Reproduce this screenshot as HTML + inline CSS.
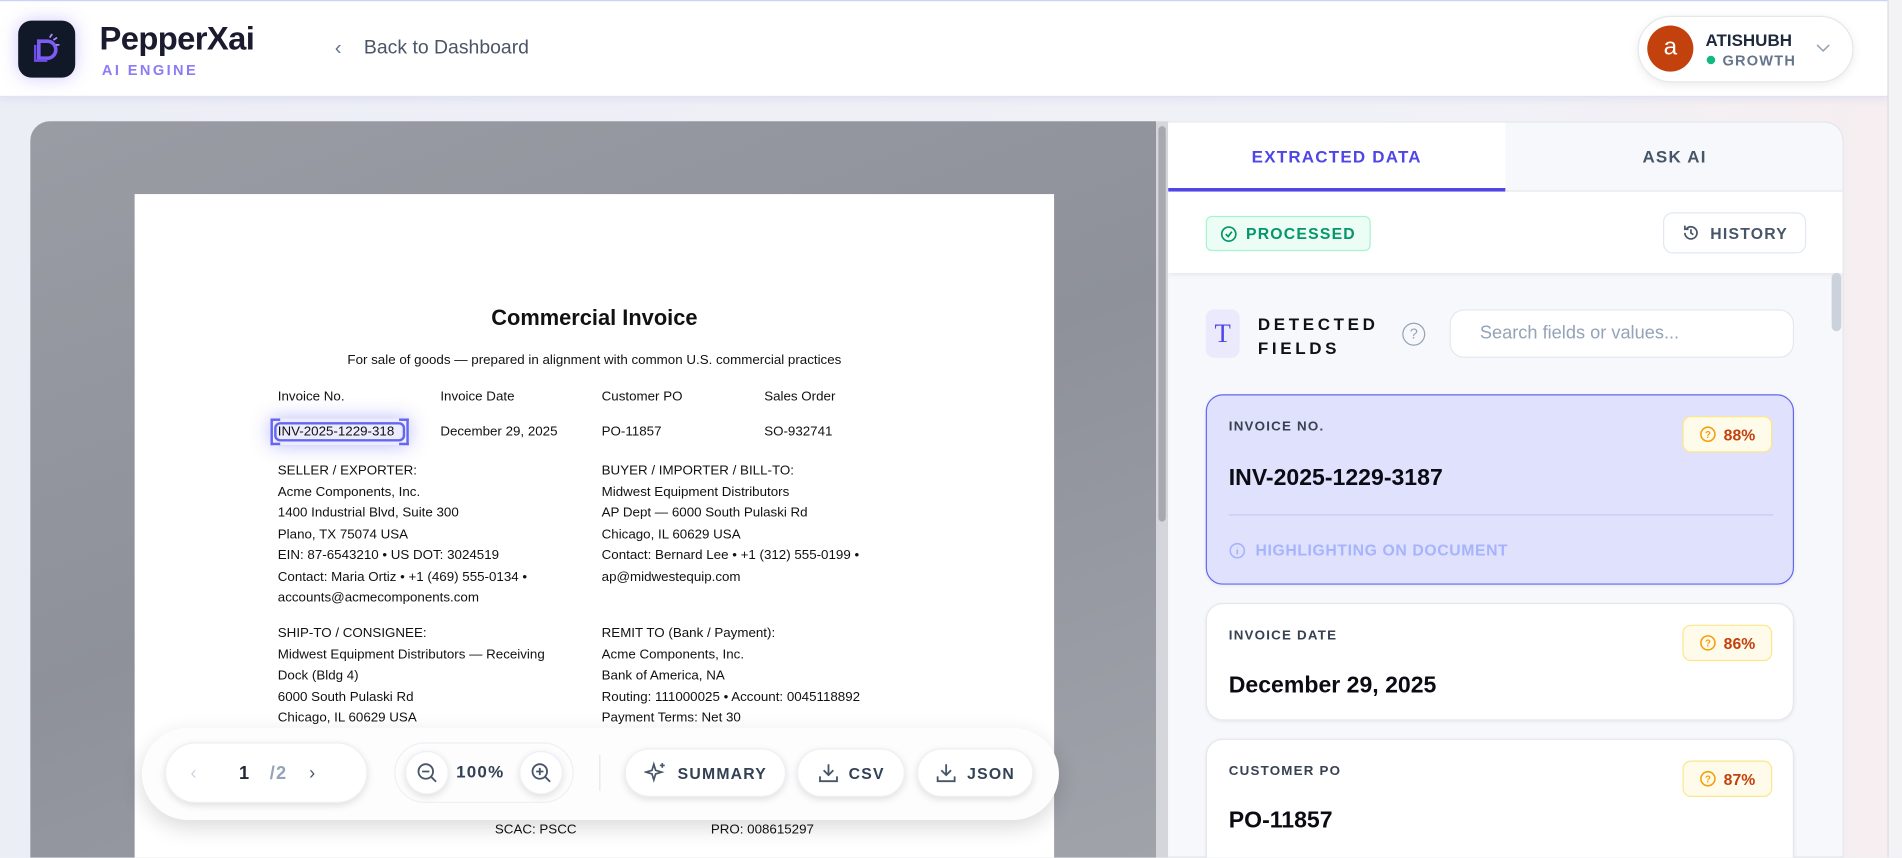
<!DOCTYPE html>
<html><head><meta charset="utf-8"><style>
*{box-sizing:border-box;margin:0;padding:0}
html,body{width:1902px;height:858px;overflow:hidden;background:#eef0f7;font-family:"Liberation Sans",sans-serif}
#w{position:absolute;left:0;top:0;width:1568px;height:707px;overflow:hidden;transform:scale(1.21301);transform-origin:0 0;background:linear-gradient(90deg,#eceef6,#f1f1f7 80%,#f6eef0)}
.a{position:absolute}
.hdr{left:0;top:0;width:1556px;height:80px;background:#fff;border-top:1px solid #c7d2fe;border-bottom:1px solid #dfe3f3;box-shadow:0 2px 6px rgba(120,120,200,.12)}
.doc div{position:absolute;font-size:11px;color:#111;white-space:nowrap;font-family:"Liberation Sans Narrow","Liberation Sans",sans-serif}
.pill{position:absolute;background:#fff;border-radius:30px;box-shadow:0 2px 6px rgba(0,0,0,.12);border:1px solid #eef0f4;display:flex;align-items:center;justify-content:center;font-weight:bold;font-size:13px;color:#334155;letter-spacing:1px;gap:8px}
.card{position:absolute;left:994px;width:485px;border-radius:14px;background:#fff;border:1px solid #e5e7eb;box-shadow:0 1px 3px rgba(0,0,0,.06)}
.lbl{position:absolute;left:18px;top:20px;font-size:11px;font-weight:bold;letter-spacing:1px;color:#374151}
.val{position:absolute;left:18px;font-size:19px;font-weight:bold;color:#0b0b14}
.bdg{position:absolute;right:17px;top:17px;width:74px;height:30px;background:#fffbeb;border:1px solid #fde68a;border-radius:7px;display:flex;align-items:center;justify-content:center;gap:6px;color:#c2410c;font-weight:bold;font-size:13px}
</style></head><body><div id="w">
<div class="a hdr"></div>
<div class="a" style="left:1556px;top:0;width:12px;height:707px;background:#f3f3f5;border-left:1px solid #dcdce0"></div>
<div class="a" style="left:15px;top:17px;width:47px;height:47px;border-radius:11px;background:#111827;box-shadow:0 0 14px rgba(120,100,255,.35)">
<svg width="47" height="47" viewBox="0 0 47 47"><path d="M17 17h7a7 7 0 0 1 0 14h-7z" fill="none" stroke="#7c5cf6" stroke-width="3"/><path d="M14 20v13h10" fill="none" stroke="#6d4de6" stroke-width="2"/><path d="M26 14l2-3M29 16l3-2M31 20h3" stroke="#a78bfa" stroke-width="1.5"/></svg></div>
<div class="a" style="left:82px;top:17px;font-size:27px;font-weight:bold;color:#1a1b2e;letter-spacing:-.5px">PepperXai</div>
<div class="a" style="left:84px;top:51px;font-size:12px;color:#8b7cf6;letter-spacing:2px;font-weight:bold">AI ENGINE</div>
<div class="a" style="left:276px;top:30px;font-size:17px;color:#64748b">&#8249;</div>
<div class="a" style="left:300px;top:31px;font-size:16px;color:#4b5568">Back to Dashboard</div>
<div class="a" style="left:1350px;top:13px;width:178px;height:55px;border-radius:28px;background:#fff;border:1px solid #e5e7eb;box-shadow:0 2px 8px rgba(0,0,0,.08)"></div>
<div class="a" style="left:1358px;top:21px;width:38px;height:38px;border-radius:50%;background:#c2410c;color:#fff;font-size:20px;text-align:center;line-height:36px">a</div>
<div class="a" style="left:1406px;top:25px;font-size:14px;font-weight:bold;color:#1e293b">ATISHUBH</div>
<div class="a" style="left:1407px;top:46px;width:7px;height:7px;border-radius:50%;background:#10b981"></div>
<div class="a" style="left:1420px;top:43px;font-size:12px;color:#64748b;letter-spacing:1px;font-weight:bold">GROWTH</div>
<svg class="a" style="left:1497px;top:35px" width="12" height="10"><path d="M1 2l5 5 5-5" fill="none" stroke="#94a3b8" stroke-width="1.3"/></svg>

<div class="a" style="left:25px;top:100px;width:928px;height:607px;border-radius:16px 0 0 0;background:linear-gradient(160deg,#9a9ca4,#8e919a 50%,#a0a3aa)"></div>
<div class="a" style="left:953px;top:100px;width:10px;height:607px;background:#d4d6db"></div>
<div class="a" style="left:955px;top:104px;width:6px;height:326px;background:#a6a9b0;border-radius:3px"></div>
<div class="a doc" style="left:111px;top:160px;width:758px;height:547px;background:#fff">
<div style="left:0;width:758px;text-align:center;top:92px;font-size:18px;font-weight:bold;font-family:'Liberation Sans',sans-serif">Commercial Invoice</div>
<div style="left:0;width:758px;text-align:center;top:131px">For sale of goods — prepared in alignment with common U.S. commercial practices</div>
<div style="left:118px;top:161px">Invoice No.</div><div style="left:252px;top:161px">Invoice Date</div><div style="left:385px;top:161px">Customer PO</div><div style="left:519px;top:161px">Sales Order</div>
<div style="left:112px;top:185px;width:114px;height:22px;background:rgba(99,102,241,.12);box-shadow:0 0 16px rgba(99,102,241,.45)"></div>
<div style="left:115px;top:188px;width:108px;height:16px;border:2px solid #6366f1;border-radius:5px"></div>
<div style="left:112px;top:185px;width:8px;height:22px;border:2px solid #6366f1;border-right:none"></div>
<div style="left:218px;top:185px;width:8px;height:22px;border:2px solid #6366f1;border-left:none"></div>
<div style="left:118px;top:190px">INV-2025-1229-318</div><div style="left:252px;top:190px">December 29, 2025</div><div style="left:385px;top:190px">PO-11857</div><div style="left:519px;top:190px">SO-932741</div>
<div style="left:118px;top:220px;line-height:17.5px">SELLER / EXPORTER:<br>Acme Components, Inc.<br>1400 Industrial Blvd, Suite 300<br>Plano, TX 75074 USA<br>EIN: 87-6543210 • US DOT: 3024519<br>Contact: Maria Ortiz • +1 (469) 555-0134 •<br>accounts@acmecomponents.com</div>
<div style="left:385px;top:220px;line-height:17.5px">BUYER / IMPORTER / BILL-TO:<br>Midwest Equipment Distributors<br>AP Dept — 6000 South Pulaski Rd<br>Chicago, IL 60629 USA<br>Contact: Bernard Lee • +1 (312) 555-0199 •<br>ap@midwestequip.com</div>
<div style="left:118px;top:354px;line-height:17.5px">SHIP-TO / CONSIGNEE:<br>Midwest Equipment Distributors — Receiving<br>Dock (Bldg 4)<br>6000 South Pulaski Rd<br>Chicago, IL 60629 USA</div>
<div style="left:385px;top:354px;line-height:17.5px">REMIT TO (Bank / Payment):<br>Acme Components, Inc.<br>Bank of America, NA<br>Routing: 111000025 • Account: 0045118892<br>Payment Terms: Net 30</div>
<div style="left:297px;top:518px">SCAC: PSCC</div><div style="left:475px;top:518px">PRO: 008615297</div>
</div>
<div class="a" style="left:117px;top:600px;width:756px;height:76px;border-radius:38px;background:#fdfdfe;box-shadow:0 6px 18px rgba(0,0,0,.15)"></div>
<div class="pill" style="left:136px;top:612px;width:167px;height:50px;justify-content:flex-start;padding-left:20px;font-size:15px;gap:0">
<span style="color:#cbd5e1;font-weight:normal">&#8249;</span><span style="margin-left:34px;color:#1e293b">1</span><span style="margin-left:16px;color:#94a3b8">/2</span><span style="margin-left:18px;color:#475569;font-weight:normal">&#8250;</span></div>
<div class="a" style="left:325px;top:612px;width:148px;height:50px;border-radius:26px;border:1px solid #eef0f4;background:#fdfdfe"></div>
<div class="pill" style="left:334px;top:619px;width:36px;height:36px"><svg width="18" height="18"><circle cx="8" cy="8" r="6" fill="none" stroke="#475569" stroke-width="1.5"/><path d="M5 8h6M12.5 12.5l4 4" stroke="#475569" stroke-width="1.5"/></svg></div>
<div class="a" style="left:376px;top:628px;font-size:14px;font-weight:bold;color:#334155;letter-spacing:1px">100%</div>
<div class="pill" style="left:428px;top:619px;width:36px;height:36px"><svg width="18" height="18"><circle cx="8" cy="8" r="6" fill="none" stroke="#475569" stroke-width="1.5"/><path d="M5 8h6M8 5v6M12.5 12.5l4 4" stroke="#475569" stroke-width="1.5"/></svg></div>
<div class="a" style="left:494px;top:622px;width:1px;height:30px;background:#e5e7eb"></div>
<div class="pill" style="left:515px;top:617px;width:133px;height:40px"><svg width="20" height="20"><path d="M8 3l1.5 5 5 1.5-5 1.5L8 16l-1.5-5L1.5 9.5l5-1.5z" fill="none" stroke="#475569" stroke-width="1.4"/><path d="M15 2v4M13 4h4" stroke="#475569" stroke-width="1.3"/></svg>SUMMARY</div>
<div class="pill" style="left:657px;top:617px;width:89px;height:40px"><svg width="18" height="18"><path d="M9 2v9M5 7l4 4 4-4M2 12v4h14v-4" fill="none" stroke="#475569" stroke-width="1.5"/></svg>CSV</div>
<div class="pill" style="left:756px;top:617px;width:96px;height:40px"><svg width="18" height="18"><path d="M9 2v9M5 7l4 4 4-4M2 12v4h14v-4" fill="none" stroke="#475569" stroke-width="1.5"/></svg>JSON</div>

<div class="a" style="left:963px;top:100px;width:557px;height:607px;border-radius:0 16px 0 0;background:#f7f8fb;border:1px solid #e3e5ea;border-left:none;overflow:hidden">
<div class="a" style="left:0;top:0;width:278px;height:57px;background:#fff;border-bottom:3px solid #4f46e5;text-align:center;line-height:56px;font-size:14px;font-weight:bold;color:#4f46e5;letter-spacing:1px">EXTRACTED DATA</div>
<div class="a" style="left:278px;top:0;width:279px;height:57px;border-bottom:1px solid #e5e7eb;text-align:center;line-height:56px;font-size:14px;font-weight:bold;color:#475569;letter-spacing:1px">ASK AI</div>
<div class="a" style="left:0;top:57px;width:557px;height:67px;background:#fff;box-shadow:0 2px 4px rgba(0,0,0,.06)"></div>
<div class="a" style="left:31px;top:77px;width:136px;height:29px;background:#ecfdf5;border:1px solid #a7f3d0;border-radius:5px;display:flex;align-items:center;justify-content:center;gap:7px;color:#059669;font-size:13px;font-weight:bold;letter-spacing:1px"><svg width="14" height="14"><circle cx="7" cy="7" r="5.8" fill="none" stroke="#059669" stroke-width="1.4"/><path d="M4.5 7l2 2 3-4" fill="none" stroke="#059669" stroke-width="1.4"/></svg>PROCESSED</div>
<div class="a" style="left:408px;top:74px;width:118px;height:34px;background:#fff;border:1px solid #e2e8f0;border-radius:8px;display:flex;align-items:center;justify-content:center;gap:8px;color:#475569;font-size:13px;font-weight:bold;letter-spacing:1px"><svg width="16" height="16"><path d="M3 8a5 5 0 1 0 1.5-3.6M3 2v3h3M8 5v3l2 1.5" fill="none" stroke="#475569" stroke-width="1.4"/></svg>HISTORY</div>
<div class="a" style="left:547px;top:124px;width:8px;height:48px;background:#cbd2dc;border-radius:4px"></div>
<div class="a" style="left:31px;top:154px;width:28px;height:40px;border-radius:7px;background:#ebeafd;color:#4f46e5;font-size:22px;text-align:center;line-height:40px;font-family:'Liberation Serif',serif">T</div>
<div class="a" style="left:74px;top:156px;font-size:14px;font-weight:bold;color:#111;letter-spacing:3px;line-height:20px">DETECTED<br>FIELDS</div>
<div class="a" style="left:193px;top:165px;width:19px;height:19px;border-radius:50%;border:1.5px solid #94a3b8;color:#94a3b8;font-size:12px;text-align:center;line-height:16px">?</div>
<div class="a" style="left:232px;top:154px;width:284px;height:40px;border-radius:12px;background:#fff;border:1px solid #e2e8f0;padding-left:24px;line-height:38px;font-size:15px;color:#94a3b8">Search fields or values...</div>
</div>
<div class="card" style="top:325px;height:157px;background:#e0e1fc;border-color:#6366f1">
<div class="lbl">INVOICE NO.</div><div class="val" style="top:58px">INV-2025-1229-3187</div>
<div class="bdg"><svg width="14" height="14"><circle cx="7" cy="7" r="5.8" fill="none" stroke="#f59e0b" stroke-width="1.3"/><text x="7" y="10" font-size="8" text-anchor="middle" fill="#f59e0b" font-family="Liberation Sans">?</text></svg>88%</div>
<div class="a" style="left:18px;top:98px;width:449px;height:1px;background:#c7c9f3"></div>
<div class="a" style="left:18px;top:120px;display:flex;gap:8px;align-items:center;color:#a5b4fc;font-size:13px;font-weight:bold;letter-spacing:.5px"><svg width="14" height="14"><circle cx="7" cy="7" r="5.8" fill="none" stroke="#a5b4fc" stroke-width="1.3"/><path d="M7 6v4M7 4v.5" stroke="#a5b4fc" stroke-width="1.4"/></svg>HIGHLIGHTING ON DOCUMENT</div>
</div>
<div class="card" style="top:497px;height:97px">
<div class="lbl">INVOICE DATE</div><div class="val" style="top:57px">December 29, 2025</div>
<div class="bdg"><svg width="14" height="14"><circle cx="7" cy="7" r="5.8" fill="none" stroke="#f59e0b" stroke-width="1.3"/><text x="7" y="10" font-size="8" text-anchor="middle" fill="#f59e0b" font-family="Liberation Sans">?</text></svg>86%</div>
</div>
<div class="card" style="top:609px;height:110px">
<div class="lbl">CUSTOMER PO</div><div class="val" style="top:56px">PO-11857</div>
<div class="bdg"><svg width="14" height="14"><circle cx="7" cy="7" r="5.8" fill="none" stroke="#f59e0b" stroke-width="1.3"/><text x="7" y="10" font-size="8" text-anchor="middle" fill="#f59e0b" font-family="Liberation Sans">?</text></svg>87%</div>
</div>
</div></body></html>
